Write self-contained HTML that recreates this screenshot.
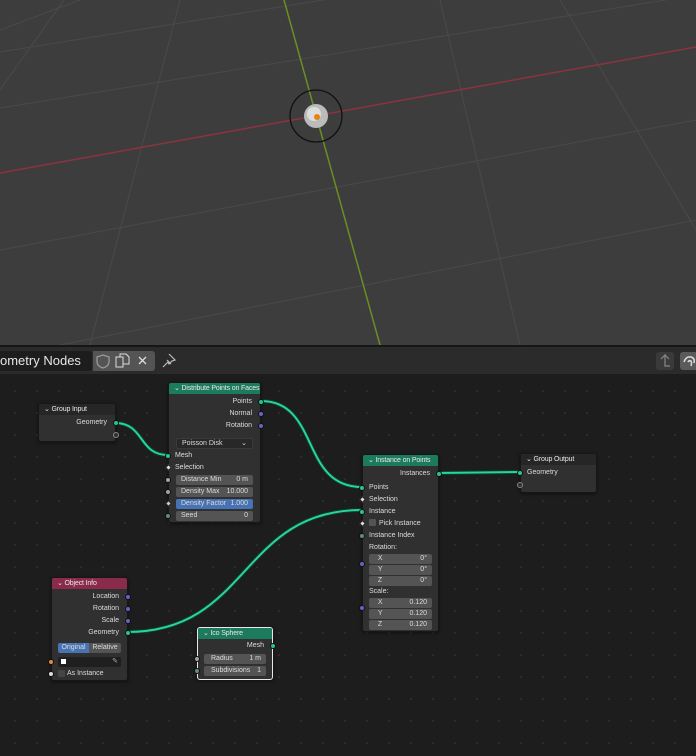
<!DOCTYPE html>
<html><head><meta charset="utf-8"><style>
*{margin:0;padding:0;box-sizing:border-box}
body{width:696px;height:756px;overflow:hidden;background:#1d1d1d;font-family:"Liberation Sans",sans-serif;font-size:7px;color:#ddd;position:relative}
.vp{position:absolute;left:0;top:0;width:696px;height:345px;background:#3d3d3d;overflow:hidden}
.hdr{position:absolute;left:0;top:345px;width:696px;height:29px;background:#2b2b2b;border-top:2px solid #161616}
.ne{position:absolute;left:0;top:374px;width:696px;height:382px;background-color:#1d1d1d;background-image:radial-gradient(#2c2c2c 1px,transparent 1.2px);background-size:22px 22px;background-position:4px 6px}
.n{position:absolute;background:#303030;border:1px solid #171717;border-radius:3px;box-shadow:0 1px 3px rgba(0,0,0,.5)}
.nh{height:11px;line-height:11px;padding-left:5px;color:#e8e8e8;border-radius:2px 2px 0 0;white-space:nowrap;overflow:hidden;letter-spacing:-0.15px}
.nh:before{content:"⌄ ";font-size:7px}
.r{position:absolute;right:8px;color:#ddd;white-space:nowrap}
.l{position:absolute;left:8px;color:#ddd;white-space:nowrap}
.s{position:absolute;width:6px;height:6px;border-radius:50%;border:1px solid #111}
.g{background:#26c48f}.b{background:#6363c7}.gr{background:#a1a1a1}.dg{background:#5e8f6e}
.f{position:absolute;left:7px;right:7px;height:10px;background:#545454;border-radius:2px;line-height:10px;color:#ddd;padding:0 5px;white-space:nowrap}
.f span{float:right}
</style></head><body>
<div class="vp">
<svg width="696" height="345" style="position:absolute;left:0;top:0">
<g stroke="#4a4a4a" stroke-width="1" fill="none">
<line x1="0" y1="52" x2="696" y2="-60"/>
<line x1="0" y1="108" x2="696" y2="-5"/>
<line x1="0" y1="250" x2="696" y2="120"/>
<line x1="60" y1="345" x2="696" y2="220"/>
<line x1="64" y1="0" x2="0" y2="90"/>
<line x1="180" y1="0" x2="90" y2="345"/>
<line x1="440" y1="0" x2="520" y2="345"/>
<line x1="560" y1="0" x2="696" y2="230"/>
<line x1="0" y1="30" x2="80" y2="0"/>
</g>
<line x1="0" y1="173" x2="696" y2="47" stroke="#8a3440" stroke-width="1.5"/>
<line x1="284" y1="0" x2="380" y2="345" stroke="#6a8f22" stroke-width="1.5"/>
<circle cx="316" cy="116" r="26" fill="none" stroke="#111" stroke-width="1.3"/>
<circle cx="316" cy="116" r="12" fill="#bbb"/>
<circle cx="314" cy="114" r="7" fill="#ddd"/>
<circle cx="317" cy="117" r="3" fill="#e8820e"/>
</svg>
</div>
<div class="hdr">
<div style="position:absolute;left:0;top:4px;width:92px;height:20px;background:#1d1d1d;border-radius:0 3px 3px 0;font-size:13px;line-height:20px;color:#e6e6e6;white-space:nowrap;overflow:hidden">ometry Nodes</div>
<div style="position:absolute;left:93px;top:4px;width:62px;height:20px;background:#545454;border-radius:0 3px 3px 0"></div>
<svg style="position:absolute;left:93px;top:4px" width="62" height="20"><path d="M10 4 L16 6 L16 11 Q16 15 10 17 Q4 15 4 11 L4 6 Z" fill="none" stroke="#999" stroke-width="1.3"/><rect x="23" y="6" width="7" height="10" fill="none" stroke="#ddd"/><path d="M27 6 V3 H33 L36 6 V13 H30" fill="none" stroke="#ddd"/><path d="M46 6 L53 13 M53 6 L46 13" stroke="#ddd" stroke-width="1.3"/></svg>
<svg style="position:absolute;left:160px;top:5px" width="18" height="18"><path d="M9 2 L15 8 L12 9 L9 12 L8 10 L3 15 M7 8 L11 12" fill="none" stroke="#bbb" stroke-width="1.2"/></svg>
<div style="position:absolute;left:656px;top:5px;width:18px;height:18px;background:#3a3a3a;border-radius:3px"></div>
<svg style="position:absolute;left:656px;top:5px" width="18" height="18"><path d="M5 7 L9 3 L9 14 H14 M9 3 L13 7" fill="none" stroke="#888" stroke-width="1.2"/></svg>
<div style="position:absolute;left:680px;top:5px;width:18px;height:18px;background:#5a5a5a;border-radius:3px"></div>
<svg style="position:absolute;left:680px;top:5px" width="18" height="18"><path d="M4 10 Q6 4 11 5 Q15 6 14 11 M8 10 Q9 8 11 9 Q12 11 11 14" fill="none" stroke="#ddd" stroke-width="1.5"/></svg>
</div>
<div class="ne"></div>
<svg width="696" height="756" style="position:absolute;left:0;top:0">
<g fill="none" stroke="#0e3d2d" stroke-width="4">
<path d="M115 423 C145 423 138 455 168 455"/>
<path d="M261 401 C320 401 300 487 362 487"/>
<path d="M127 632 C250 632 240 510 362 510"/>
<path d="M438 473 L520 472"/>
</g>
<g fill="none" stroke="#2ad39a" stroke-width="2">
<path d="M115 423 C145 423 138 455 168 455"/>
<path d="M261 401 C320 401 300 487 362 487"/>
<path d="M127 632 C250 632 240 510 362 510"/>
<path d="M438 473 L520 472"/>
</g>
</svg>

<div class="n" style="left:38px;top:403px;width:78px;height:39px">
<div class="nh" style="background:#262626">Group Input</div>
<div class="r" style="top:15px">Geometry</div>
<div class="s g" style="right:-4px;top:16px"></div>
<div class="s" style="right:-4px;top:28px;border-color:#888;background:#303030"></div>
</div>

<div class="n" style="left:168px;top:382px;width:93px;height:141px">
<div class="nh" style="background:#1c7a5d">Distribute Points on Faces</div>
<div class="r" style="top:15px">Points</div><div class="s g" style="right:-4px;top:16px"></div>
<div class="r" style="top:27px">Normal</div><div class="s b" style="right:-4px;top:28px"></div>
<div class="r" style="top:39px">Rotation</div><div class="s b" style="right:-4px;top:40px"></div>
<div class="f" style="top:55px;background:#282828;border:1px solid #3a3a3a;height:11px">Poisson Disk<span>⌄</span></div>
<div class="l" style="top:69px;left:6px">Mesh</div><div class="s g" style="left:-4px;top:70px"></div>
<div class="l" style="top:81px;left:6px">Selection</div><div class="s" style="left:-3px;top:82px;width:5px;height:5px;background:#ddd;transform:rotate(45deg);border-radius:0"></div>
<div class="f" style="top:92px">Distance Min<span>0 m</span></div><div class="s gr" style="left:-4px;top:94px"></div>
<div class="f" style="top:104px">Density Max<span>10.000</span></div><div class="s gr" style="left:-4px;top:106px"></div>
<div class="f" style="top:116px;background:#4772b3">Density Factor<span>1.000</span></div><div class="s" style="left:-3px;top:118px;width:5px;height:5px;background:#ccc;transform:rotate(45deg);border-radius:0"></div>
<div class="f" style="top:128px">Seed<span>0</span></div><div class="s dg" style="left:-4px;top:130px"></div>
</div>

<div class="n" style="left:362px;top:454px;width:77px;height:178px">
<div class="nh" style="background:#1c7a5d">Instance on Points</div>
<div class="r" style="top:15px">Instances</div><div class="s g" style="right:-4px;top:16px"></div>
<div class="l" style="top:29px;left:6px">Points</div><div class="s g" style="left:-4px;top:30px"></div>
<div class="l" style="top:41px;left:6px">Selection</div><div class="s" style="left:-3px;top:42px;width:5px;height:5px;background:#ddd;transform:rotate(45deg);border-radius:0"></div>
<div class="l" style="top:53px;left:6px">Instance</div><div class="s g" style="left:-4px;top:54px"></div>
<div style="position:absolute;left:6px;top:64px;width:7px;height:7px;background:#545454;border-radius:1px"></div>
<div class="l" style="top:65px;left:16px">Pick Instance</div><div class="s" style="left:-3px;top:66px;width:5px;height:5px;background:#ddd;transform:rotate(45deg);border-radius:0"></div>
<div class="l" style="top:77px;left:6px">Instance Index</div><div class="s dg" style="left:-4px;top:78px"></div>
<div class="l" style="top:89px;left:6px">Rotation:</div>
<div class="f" style="top:99px;left:6px;right:6px">&nbsp;&nbsp;X<span>0°</span></div>
<div class="f" style="top:110px;left:6px;right:6px">&nbsp;&nbsp;Y<span>0°</span></div>
<div class="f" style="top:121px;left:6px;right:6px">&nbsp;&nbsp;Z<span>0°</span></div>
<div class="s b" style="left:-4px;top:106px"></div>
<div class="l" style="top:133px;left:6px">Scale:</div>
<div class="f" style="top:143px;left:6px;right:6px">&nbsp;&nbsp;X<span>0.120</span></div>
<div class="f" style="top:154px;left:6px;right:6px">&nbsp;&nbsp;Y<span>0.120</span></div>
<div class="f" style="top:165px;left:6px;right:6px">&nbsp;&nbsp;Z<span>0.120</span></div>
<div class="s b" style="left:-4px;top:150px"></div>
</div>

<div class="n" style="left:520px;top:453px;width:77px;height:40px">
<div class="nh" style="background:#262626">Group Output</div>
<div class="l" style="top:15px;left:6px">Geometry</div><div class="s g" style="left:-4px;top:16px"></div>
<div class="s" style="left:-4px;top:28px;border-color:#888;background:#303030"></div>
</div>

<div class="n" style="left:51px;top:577px;width:77px;height:104px">
<div class="nh" style="background:#8b2b4b">Object Info</div>
<div class="r" style="top:15px">Location</div><div class="s b" style="right:-4px;top:16px"></div>
<div class="r" style="top:27px">Rotation</div><div class="s b" style="right:-4px;top:28px"></div>
<div class="r" style="top:39px">Scale</div><div class="s b" style="right:-4px;top:40px"></div>
<div class="r" style="top:51px">Geometry</div><div class="s g" style="right:-4px;top:52px"></div>
<div style="position:absolute;left:6px;top:65px;width:31px;height:10px;background:#4772b3;border-radius:2px 0 0 2px;text-align:center;line-height:10px">Original</div>
<div style="position:absolute;left:37px;top:65px;width:32px;height:10px;background:#545454;border-radius:0 2px 2px 0;text-align:center;line-height:10px">Relative</div>
<div style="position:absolute;left:6px;top:79px;width:63px;height:10px;background:#1f1f1f;border-radius:2px"><div style="position:absolute;left:3px;top:2px;width:5px;height:5px;background:#fff"></div><span style="position:absolute;right:3px;top:0;color:#aaa">✎</span></div>
<div class="s" style="left:-4px;top:81px;background:#e38a3a"></div>
<div style="position:absolute;left:6px;top:92px;width:7px;height:7px;background:#454545;border-radius:1px"></div>
<div class="l" style="top:92px;left:15px">As Instance</div>
<div class="s" style="left:-4px;top:93px;background:#e8d8dd"></div>
</div>

<div class="n" style="left:197px;top:627px;width:76px;height:53px;border:1px solid #e8e8e8">
<div class="nh" style="background:#1c7a5d">Ico Sphere</div>
<div class="r" style="top:14px">Mesh</div><div class="s g" style="right:-4px;top:15px"></div>
<div class="f" style="top:26px;left:6px;right:6px">&nbsp;Radius<span>1 m</span></div><div class="s gr" style="left:-4px;top:28px"></div>
<div class="f" style="top:38px;left:6px;right:6px">&nbsp;Subdivisions<span>1</span></div><div class="s dg" style="left:-4px;top:40px"></div>
</div>
</body></html>
